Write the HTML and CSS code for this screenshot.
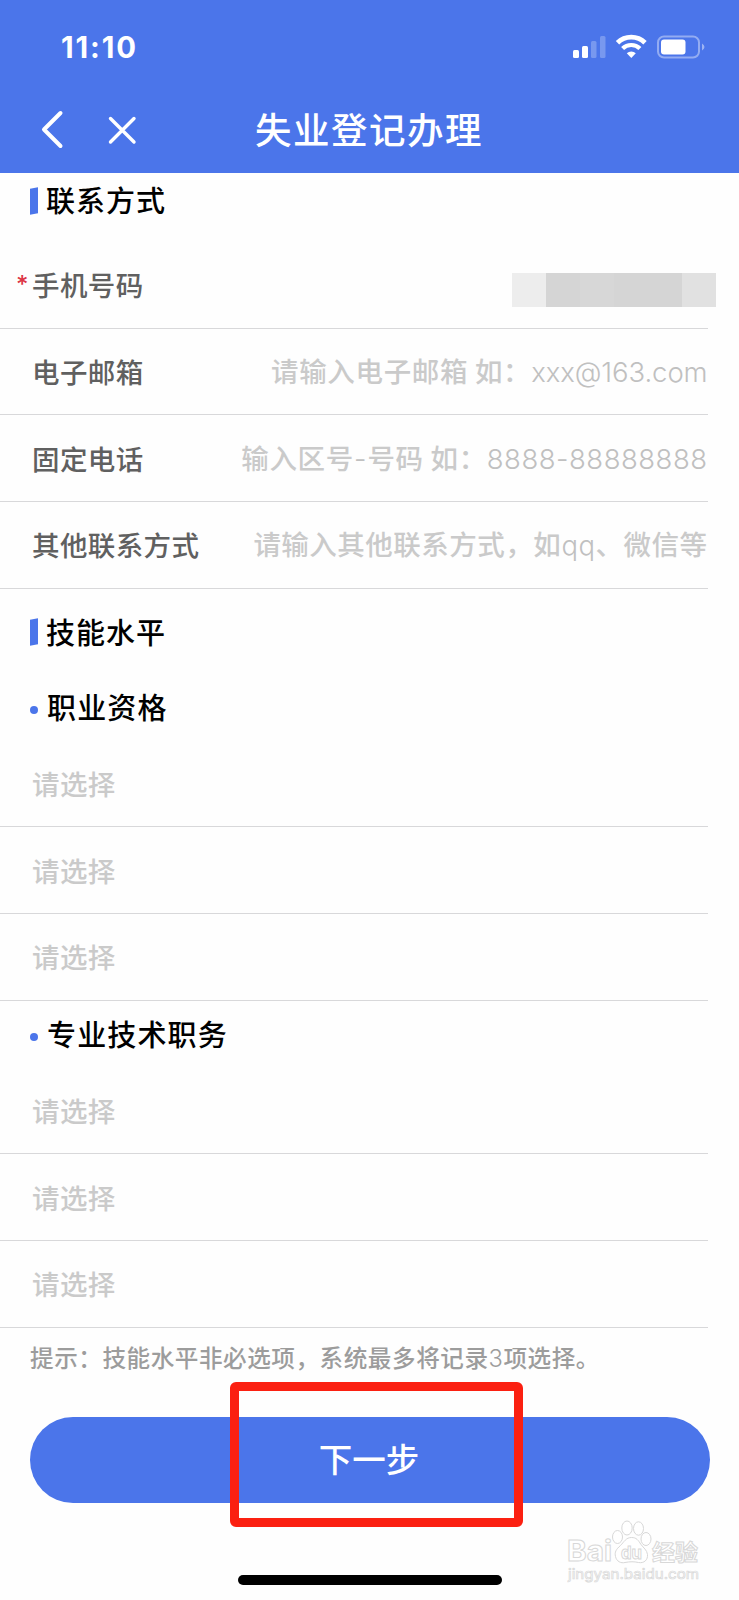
FILE: index.html
```html
<!DOCTYPE html>
<html lang="zh-CN">
<head>
<meta charset="utf-8">
<title>失业登记办理</title>
<link rel="stylesheet" href="styles.css">
</head>
<body>
<div class="screen">
  <header class="header">
    <div class="status">
      <span class="clock">11:10</span>
      <svg class="status-icons" width="134" height="26" viewBox="0 0 134 26">
        <g fill="#fff">
          <rect x="1" y="16" width="6" height="8" rx="1.5"/>
          <rect x="10" y="12" width="6" height="12" rx="1.5"/>
          <g opacity=".25"><rect x="19" y="7" width="5.500" height="17" rx="1.500"/><rect x="28" y="2" width="5.500" height="22" rx="1.500"/></g>
        </g>
        <g fill="none" stroke="#fff">
          <path d="M45.500 8.800a19.500 19.500 0 0 1 27.500 0" stroke-width="4.800"/>
          <path d="M50.600 14.600a12.200 12.200 0 0 1 17.300 0" stroke-width="4.200"/>
        </g>
        <path d="M54.800 19.300a6.500 6.500 0 0 1 9 0L59.300 24z" fill="#fff"/>
        <rect x="86" y="2.500" width="41" height="21" rx="6" fill="none" stroke="#fff" stroke-opacity=".4" stroke-width="2"/>
        <rect x="89" y="5.500" width="24.500" height="15" rx="3" fill="#fff"/>
        <path d="M130 9.500q5 3.500 0 7z" fill="#fff" fill-opacity=".45"/>
      </svg>
    </div>
    <nav class="nav">
      <svg class="nav-icons" width="100" height="44" viewBox="0 0 100 44" fill="none" stroke="#fff" stroke-linecap="round" stroke-linejoin="round">
        <path d="M20.500 6L4 22.500L20.500 39" stroke-width="4"/>
        <path d="M70.500 11.500L94 35M94 11.500L70.500 35" stroke-width="3.400"/>
      </svg>
      <h1 class="title">失业登记办理</h1>
    </nav>
  </header>

  <main>
    <h2 class="section contact"><i class="bar"></i>联系方式</h2>
    <div class="row"><label class="label"><span class="star">*</span>手机号码</label>
      <span class="mosaic"><i></i><i></i><i></i><i></i><i></i><i></i></span></div>
    <div class="row"><label class="label">电子邮箱</label><span class="hint">请输入电子邮箱 如：<span class="latin mail">xxx@163.com</span></span></div>
    <div class="row"><label class="label">固定电话</label><span class="hint">输入区号<span class="latin hyphen">-</span>号码 如：<span class="latin phone">8888-88888888</span></span></div>
    <div class="row"><label class="label">其他联系方式</label><span class="hint other">请输入其他联系方式，如<span class="latin">qq</span>、微信等</span></div>

    <h2 class="section skills"><i class="bar"></i>技能水平</h2>
    <h3 class="sub"><i class="dot"></i>职业资格</h3>
    <div class="row"><span class="choose">请选择</span></div>
    <div class="row"><span class="choose">请选择</span></div>
    <div class="row"><span class="choose">请选择</span></div>
    <h3 class="sub"><i class="dot"></i>专业技术职务</h3>
    <div class="row"><span class="choose">请选择</span></div>
    <div class="row"><span class="choose">请选择</span></div>
    <div class="row"><span class="choose">请选择</span></div>
    <p class="tip">提示：技能水平非必选项，系统最多将记录<span class="three">3</span>项选择。</p>
    <button class="next">下一步</button>
  </main>

  <div class="highlight"></div>
  <div class="home-bar"></div>
  <svg class="watermark" width="140" height="70" viewBox="0 0 140 70">
    <g fill="#fff" stroke="#d8d8d8" stroke-width="1">
      <text class="wm-brand" x="0" y="41" textLength="45" lengthAdjust="spacingAndGlyphs">Bai</text>
      <ellipse cx="50.500" cy="17" rx="5" ry="6.500"/>
      <ellipse cx="60" cy="8" rx="5.200" ry="7"/>
      <ellipse cx="71.500" cy="8.500" rx="5" ry="6.700"/>
      <ellipse cx="79" cy="19" rx="5" ry="6.500"/>
      <path d="M64.500 17.500C59 17.500 57 22 53.500 25.500C49 29.500 47.500 32 48.500 36.500C49.500 41.500 54 43.500 58 42.500C63 41.500 67 41.500 71.500 42.500C77 43.500 81 40 80.500 34.500C80 30 76.500 28 74 24.500C71 20 69.500 17.500 64.500 17.500Z"/>
      <text class="wm-du" x="54" y="39" textLength="21" lengthAdjust="spacingAndGlyphs">du</text>
      <text class="wm-cjk" x="85" y="40" textLength="46" lengthAdjust="spacingAndGlyphs">经验</text>
      <text class="wm-url" x="1" y="59" textLength="131" lengthAdjust="spacingAndGlyphs">jingyan.baidu.com</text>
    </g>
  </svg>
</div>
</body>
</html>
```
FILE: styles.css
```css
* { box-sizing: border-box; }
body { margin: 0; background: #fefefe; font-family: Inter, "Noto Sans CJK SC", sans-serif; }
h1, h2, h3, p { margin: 0; font-weight: 500; }
.screen { position: relative; width: 739px; height: 1600px; overflow: hidden; }
.header { height: 173px; background: #4b75ea; color: #fff; }
.status { height: 88px; padding: 34px 33px 0 61px; display: flex; justify-content: space-between; align-items: flex-start; }
.clock { font-size: 29.3px; line-height: 28px; font-weight: 700; letter-spacing: 1.900px; }
.nav { height: 85px; padding-left: 40px; display: flex; align-items: center; }
.nav-icons { flex: none; margin-bottom: 4px; }
.title { font-family: "Noto Sans CJK SC", sans-serif; font-size: 36.500px; letter-spacing: 1.500px; line-height: 50px; margin: 0 0 3px 115px; }
.section, .sub { display: flex; align-items: center; color: #000; font-family: "Noto Sans CJK SC", sans-serif; font-size: 29px; letter-spacing: 1px; line-height: 40px; padding-left: 29px; }
.contact { height: 69px; padding-bottom: 18px; }
.skills { height: 84.800px; padding-bottom: 1px; }
.bar { width: 8px; height: 26px; margin: 3px 8.500px 0 0.500px; background: #4b75ea; transform: skewY(-12deg); }
.contact .bar { margin-top: 4px; }
.sub { height: 67px; padding-bottom: 3px; letter-spacing: 1.150px; }
.dot { width: 8px; height: 8px; margin: 9px 9.500px 0 0.500px; border-radius: 50%; background: #4b75ea; }
.row { height: 86.700px; width: 708px; padding: 0 1px 1px 32px; border-bottom: 1px solid #d8d8da; display: flex; align-items: center; justify-content: space-between; white-space: nowrap; font-family: "Noto Sans CJK SC", sans-serif; font-size: 27.500px; letter-spacing: 0.400px; line-height: 40px; }
.label { position: relative; color: #606060; font-weight: 500; }
.star { position: absolute; left: -16px; top: 1px; color: #dc3545; font-family: Inter, sans-serif; font-size: 24px; }
.hint, .choose { color: #cacaca; font-weight: 500; }
.hint { letter-spacing: 0.650px; margin-right: -0.500px; }
.other { letter-spacing: 0.500px; }
.latin { font-family: Inter, sans-serif; font-weight: 300; color: #c0c0c0; }
.mail { letter-spacing: -0.100px; }
.hyphen { letter-spacing: 1px; }
.phone { letter-spacing: 0.500px; }
.mosaic { display: flex; margin: 11px -9px 0 0; }
.mosaic i { width: 34px; height: 34px; background: #d5d5d5; }
.mosaic i:first-child { background: #ededed; }
.mosaic i:nth-child(3) { background: #d7d7d7; }
.mosaic i:last-child { background: #e1e1e1; }
.tip { height: 89.300px; padding: 9px 0 0 30px; font-family: "Noto Sans CJK SC", sans-serif; font-size: 23.600px; letter-spacing: 0.540px; line-height: 40px; font-weight: 500; color: #9c9c9c; white-space: nowrap; }
.three { font-family: Inter, sans-serif; font-weight: 300; }
.next { display: block; width: 680px; height: 86px; margin-left: 29.500px; padding: 0 1px 4px 0; border: 0; border-radius: 43px; background: #4b75ea; color: #fff; font-family: "Noto Sans CJK SC", sans-serif; font-size: 33.500px; font-weight: 500; }
.highlight { position: absolute; left: 230px; top: 1382px; width: 293px; height: 145px; border: 9px solid #fb2011; border-radius: 6px; }
.home-bar { position: absolute; left: 238px; top: 1575px; width: 264px; height: 10px; border-radius: 5px; background: #000; }
.watermark { position: absolute; left: 567px; top: 1520px; }
.wm-brand { font: 700 29px Inter, sans-serif; }
.wm-du { font: 700 18px Inter, sans-serif; }
.wm-cjk { font: 700 22px "Noto Sans CJK SC", sans-serif; }
.wm-url { font: 400 14.500px Inter, sans-serif; stroke-width: 0.700px; }
```
